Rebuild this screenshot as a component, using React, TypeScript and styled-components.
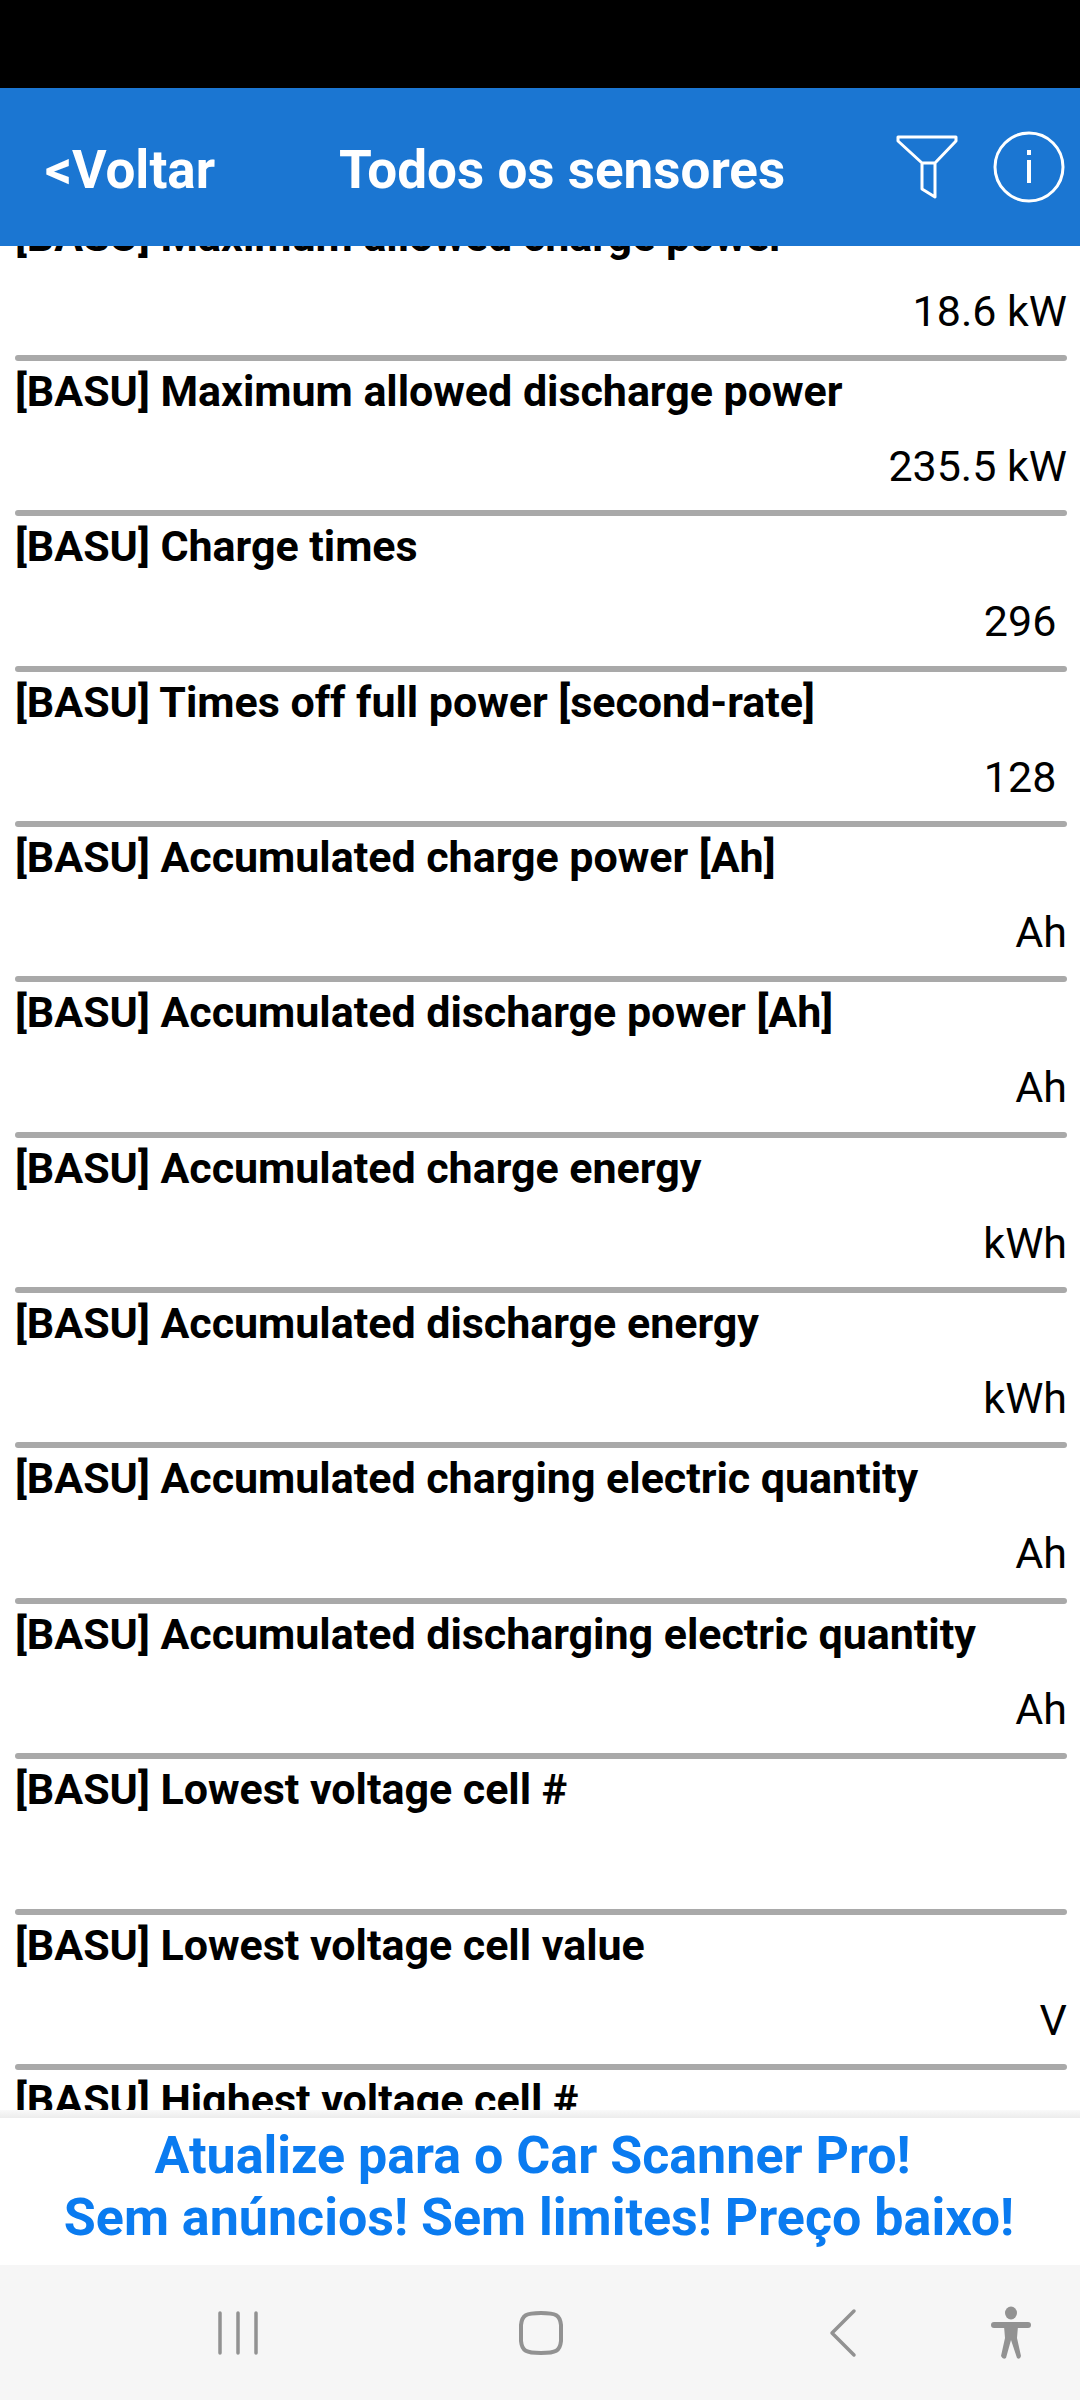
import styled, { createGlobalStyle } from "styled-components";

const GlobalStyle = createGlobalStyle`
    html, body {
        margin: 0;
        padding: 0;
        background: #fff;
    }
`;

const Screen = styled.div`
    width: 1080px;
    height: 2400px;
    display: flex;
    flex-direction: column;
    overflow: hidden;
    font-family: Roboto, "Liberation Sans", sans-serif;
`;

const StatusBar = styled.div`
    height: 88px;
    flex: none;
    background: #000;
`;

const Header = styled.header`
    height: 158px;
    flex: none;
    display: flex;
    align-items: center;
    padding-left: 45px;
    background: #1b76d2;
    color: #fff;
`;

const BackLink = styled.div`
    width: 294px;
    padding-top: 5px;
    font-size: 53px;
    font-weight: 700;
`;

const Title = styled.div`
    width: 555px;
    padding-top: 5px;
    font-size: 53px;
    font-weight: 700;
`;

const FilterIcon = styled.svg`
    flex: none;
    display: block;
`;

const InfoIcon = styled.svg`
    flex: none;
    display: block;
    margin-left: 33px;
`;

const List = styled.main`
    flex: 1;
    min-height: 0;
    overflow: hidden;
`;

const ListInner = styled.div`
    margin-top: -40.4px;
`;

const Row = styled.div`
    height: 155.36px;
    box-sizing: border-box;
    padding: 0 13px 0 15px;
    display: flex;
    flex-direction: column;
    color: #000;
`;

const RowTitle = styled.div`
    height: 68px;
    padding-top: 5px;
    box-sizing: border-box;
    font-size: 43px;
    line-height: 50px;
    font-weight: 700;
    letter-spacing: -0.03px;
    white-space: nowrap;
`;

const RowValue = styled.div`
    flex: 1;
    text-align: right;
    white-space: pre;
    font-size: 43px;
    line-height: 50px;
    padding-top: 12px;
`;

const Rule = styled.div`
    height: 6px;
    flex: none;
    border-radius: 3px;
    background: #a9a9a9;
`;

const AdShade = styled.div`
    height: 8px;
    flex: none;
    background: linear-gradient(#f9f9f9, #ececec);
`;

const AdBanner = styled.div`
    height: 147px;
    flex: none;
    box-sizing: border-box;
    padding: 7px 2px 0 0;
    background: #fff;
    text-align: center;
    white-space: pre;
    color: #0a7bf0;
    font-size: 52px;
    line-height: 62px;
    font-weight: 700;
`;

const NavBar = styled.nav`
    height: 135px;
    flex: none;
    display: flex;
    align-items: center;
    padding-left: 216px;
    background: #f6f6f6;
`;

const NavIcon = styled.svg<{ $gap: number }>`
    flex: none;
    display: block;
    margin-left: ${(p) => p.$gap}px;
`;

const rows: [string, string][] = [
    ["[BASU] Maximum allowed charge power", "18.6 kW"],
    ["[BASU] Maximum allowed discharge power", "235.5 kW"],
    ["[BASU] Charge times", "296 "],
    ["[BASU] Times off full power [second-rate]", "128 "],
    ["[BASU] Accumulated charge power [Ah]", "Ah"],
    ["[BASU] Accumulated discharge power [Ah]", "Ah"],
    ["[BASU] Accumulated charge energy", "kWh"],
    ["[BASU] Accumulated discharge energy", "kWh"],
    ["[BASU] Accumulated charging electric quantity", "Ah"],
    ["[BASU] Accumulated discharging electric quantity", "Ah"],
    ["[BASU] Lowest voltage cell #", ""],
    ["[BASU] Lowest voltage cell value", "V"],
    ["[BASU] Highest voltage cell #", ""],
];

export default function App() {
    return (
        <Screen>
            <GlobalStyle />
            <StatusBar />
            <Header>
                <BackLink>&lt;Voltar</BackLink>
                <Title>Todos os sensores</Title>
                <FilterIcon width="66" height="68" viewBox="0 0 66 68" fill="none" stroke="#fff" strokeWidth="3" strokeLinejoin="round">
                    <path d="M4 4H62V8L41 30H28L4 8Z M28 30V56L41 64V30" />
                </FilterIcon>
                <InfoIcon width="72" height="72" viewBox="0 0 72 72" fill="none" stroke="#fff" strokeWidth="3">
                    <circle cx="36" cy="36" r="34" />
                    <path d="M36 29V52" strokeWidth="4" />
                    <path d="M36 19V24" strokeWidth="4" />
                </InfoIcon>
            </Header>
            <List>
                <ListInner>
                    {rows.map(([title, value]) => (
                        <Row key={title}>
                            <RowTitle>{title}</RowTitle>
                            <RowValue>{value}</RowValue>
                            <Rule />
                        </Row>
                    ))}
                </ListInner>
            </List>
            <AdShade />
            <AdBanner>
                {"Atualize para o Car Scanner Pro! "}
                <br />
                Sem anúncios! Sem limites! Preço baixo!
            </AdBanner>
            <NavBar>
                <NavIcon $gap={0} width="44" height="46" viewBox="0 0 44 46" fill="none" stroke="#929292" strokeWidth="3.5" strokeLinecap="round">
                    <path d="M4 3V43M22 3V43M40 3V43" />
                </NavIcon>
                <NavIcon $gap={256} width="50" height="50" viewBox="0 0 50 50" fill="none" stroke="#929292" strokeWidth="4">
                    <path d="M25 5C40 5 44 7 45 17V33C44 43 40 45 25 45C10 45 6 43 5 33V17C6 7 10 5 25 5Z" />
                </NavIcon>
                <NavIcon $gap={261} width="32" height="50" viewBox="0 0 32 50" fill="none" stroke="#929292" strokeWidth="3.5" strokeLinecap="round" strokeLinejoin="round">
                    <path d="M27 3L5 25L27 47" />
                </NavIcon>
                <NavIcon $gap={129} width="46" height="54" viewBox="0 0 46 54" fill="#929292">
                    <ellipse cx="23" cy="7" rx="6" ry="6.5" />
                    <rect x="3" y="16" width="40" height="6" rx="3" />
                    <path d="M16 20H30L29 32L33 50Q32 54 29 52L23 34L18 52Q15 54 13 50L17 32Z" />
                </NavIcon>
            </NavBar>
        </Screen>
    );
}
